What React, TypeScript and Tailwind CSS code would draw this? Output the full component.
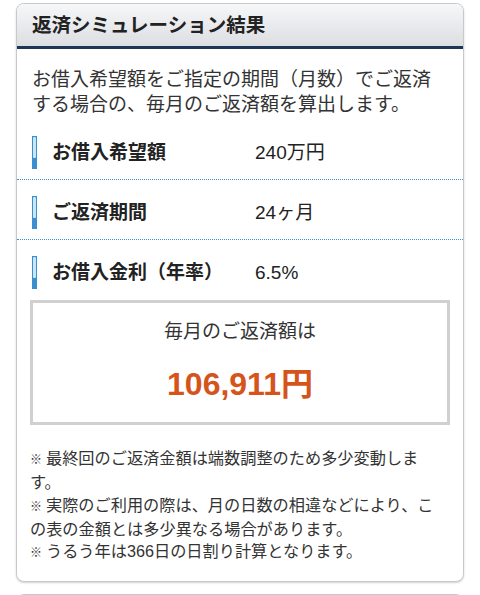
import React from "react";

const Bar = () => (
  <div className="w-[5px] h-[33px] bg-[#3b8fd0] p-[1px] flex flex-col shrink-0">
    <div className="h-[21px] bg-[#c9e6f8] rounded-[1px]"></div>
  </div>
);

const Row = ({ label, value, last }: { label: string; value: string; last?: boolean }) => (
  <div
    className={
      "flex items-center pl-[15px] pt-[16px] pb-[10px] " +
      (last ? "" : "border-b border-dotted border-[#3f8cc8]")
    }
  >
    <Bar />
    <div className="ml-[15px] w-[203px] text-[19px] font-bold text-[#222] leading-[25px]">{label}</div>
    <div className="text-[19px] text-[#222] leading-[25px]">{value}</div>
  </div>
);

const Mark = () => <span className="inline-block w-[16px] text-[12px]">※</span>;

export default function App() {
  return (
    <div
      className="bg-white w-[480px] h-[595px] overflow-hidden pt-[3px]"
      style={{ fontFamily: '"Liberation Sans", "Noto Sans CJK JP", sans-serif' }}
    >
      <div className="mx-4 border border-[#c9c9c9] rounded-[8px] overflow-hidden bg-white shadow-[0_1px_2px_rgba(0,0,0,0.18)]">
        <div className="h-[45px] bg-gradient-to-b from-[#f6f7f8] to-[#dcdee2] border-b-[3px] border-[#1c3658] flex items-center px-[15px]">
          <h2 className="text-[19.5px] font-bold text-[#222] leading-[25px]">返済シミュレーション結果</h2>
        </div>
        <p className="px-[15px] pt-[18px] pb-[3px] text-[19px] leading-[25px] text-[#333]">
          お借入希望額をご指定の期間（月数）でご返済
          <br />
          する場合の、毎月のご返済額を算出します。
        </p>
        <Row label="お借入希望額" value="240万円" />
        <Row label="ご返済期間" value="24ヶ月" />
        <Row label="お借入金利（年率）" value="6.5%" last />
        <div className="mx-[13px] mt-[1px] border-[3px] border-[#d0d0d0] h-[125px] flex flex-col items-center">
          <div className="mt-[16px] text-[19px] leading-[25px] text-[#333]">毎月のご返済額は</div>
          <div className="mt-[20px] text-[32px] leading-[40px] font-bold text-[#d5541c]">106,911円</div>
        </div>
        <div className="px-[13px] mt-[22px] pb-[17px] text-[16.2px] leading-[22.3px] text-[#333] whitespace-nowrap">
          <div><Mark />最終回のご返済金額は端数調整のため多少変動しま</div>
          <div>す。</div>
          <div><Mark />実際のご利用の際は、月の日数の相違などにより、こ</div>
          <div>の表の金額とは多少異なる場合があります。</div>
          <div><Mark />うるう年は366日の日割り計算となります。</div>
        </div>
      </div>
      <div className="mx-4 mt-[12px] h-[20px] border border-[#c9c9c9] rounded-t-[8px] bg-white"></div>
    </div>
  );
}
